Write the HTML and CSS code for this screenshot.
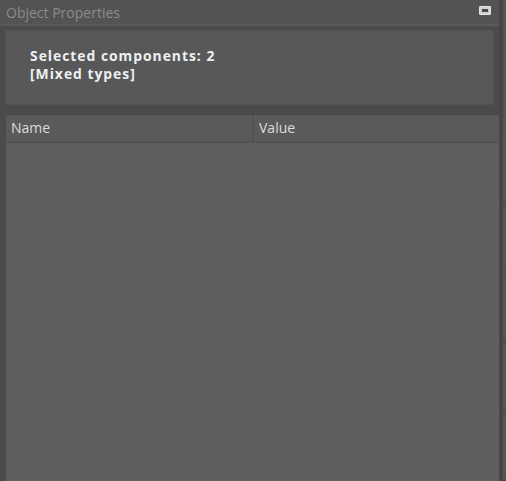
FILE: index.html
```html
<!DOCTYPE html>
<html>
<head>
<meta charset="utf-8">
<link rel="stylesheet" href="styles.css">
</head>
<body>
<div class="window">
  <div class="panel">
    <div class="titlebar">
      <span class="title">Object Properties</span>
      <span class="maxbtn"><span class="maxinner"></span></span>
    </div>
    <div class="summary-wrap">
      <div class="summary">
        <div class="line">Selected components: 2</div>
        <div class="line">[Mixed types]</div>
      </div>
    </div>
    <div class="grid">
      <div class="grid-head">
        <div class="col name">Name</div>
        <div class="col value">Value</div>
      </div>
      <div class="grid-body"></div>
    </div>
  </div>
  <div class="side">
    <div class="side-gap"></div>
    <div class="side-strip">
      <div class="seg"></div><div class="seg"></div><div class="seg"></div><div class="seg"></div><div class="seg"></div>
    </div>
  </div>
</div>
</body>
</html>
```
FILE: styles.css
```css
html, body {
  margin: 0;
  padding: 0;
  width: 506px;
  height: 481px;
  overflow: hidden;
  background: #535353;
  font-family: "Open Sans", "Noto Sans", sans-serif;
}
.window {
  display: flex;
  height: 481px;
}
.panel {
  width: 499px;
  display: flex;
  flex-direction: column;
  background: #4b4b4b;
}
.titlebar {
  height: 24px;
  background: #535353;
  border-bottom: 2px solid #5a5a5a;
  display: flex;
  align-items: center;
  justify-content: space-between;
  padding: 0 8px 0 6px;
}
.title {
  color: #8c8c8c;
  font-size: 14px;
  letter-spacing: 0;
}
.maxbtn {
  width: 10px;
  height: 7px;
  border: 1px solid #e6e6e6;
  background: #d0d0d0;
  border-radius: 1px;
  display: flex;
  align-items: center;
  justify-content: center;
  margin-top: -4px;
}
.maxinner {
  width: 6px;
  height: 3px;
  background: #4a4a4a;
}
.summary-wrap {
  padding: 4px 5px 9px 5px;
  background: #4b4b4b;
}
.summary {
  height: 75px;
  background: #585858;
  border: 1px solid #525252;
  padding: 15px 0 0 24px;
  box-sizing: border-box;
}
.line {
  color: #eef0f2;
  font-weight: bold;
  font-size: 13.9px;
  line-height: 19px;
  letter-spacing: 0.98px;
}
.line + .line {
  margin-top: -1px;
}
.grid {
  flex: 1;
  display: flex;
  flex-direction: column;
  margin-left: 6px;
  border-top: 1px solid #474747;
  background: #5f5f5f;
}
.grid-head {
  display: flex;
  height: 26px;
  background: #5a5a5a;
  border-bottom: 2px solid #525252;
}
.col {
  color: #dcdcdc;
  font-size: 14px;
  line-height: 26px;
  padding-left: 5px;
}
.name {
  width: 241px;
  border-right: 2px solid #525252;
}
.value {
  flex: 1;
}
.grid-body {
  flex: 1;
  background: #5f5f5f;
}
.side {
  flex: 1;
  display: flex;
}
.side-gap {
  width: 4px;
  background: #464646;
}
.side-strip {
  flex: 1;
  background: #555555;
  display: flex;
  flex-direction: column;
  padding-top: 135px;
}
.seg {
  height: 74px;
  border-bottom: 2px solid #4a4a4a;
}
```
